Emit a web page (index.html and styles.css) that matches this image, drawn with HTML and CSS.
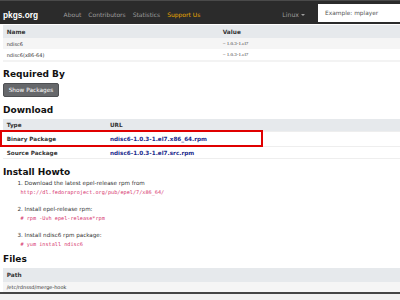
FILE: index.html
```html
<!DOCTYPE html>
<html>
<head>
<meta charset="utf-8">
<title>pkgs.org - ndisc6</title>
<link rel="stylesheet" href="styles.css">
</head>
<body>
<nav class="navbar">
  <a class="brand">pkgs.org</a>
  <ul class="nav-links">
    <li>About</li>
    <li>Contributors</li>
    <li>Statistics</li>
    <li class="support">Support Us</li>
  </ul>
  <div class="nav-right">
    <span class="distro">Linux <span class="caret"></span></span>
    <div class="search">Example: mplayer</div>
  </div>
</nav>
<main class="content">
  <div class="table t-provides">
    <div class="row head"><span>Name</span><span>Value</span></div>
    <div class="row stripe"><span>ndisc6</span><span class="ver">= 1.0.3-1.el7</span></div>
    <div class="row"><span>ndisc6(x86-64)</span><span class="ver">= 1.0.3-1.el7</span></div>
  </div>

  <h2 class="h-required">Required By</h2>
  <button class="btn">Show Packages</button>

  <h2 class="h-download">Download</h2>
  <div class="table t-download">
    <div class="row head"><span>Type</span><span>URL</span></div>
    <div class="row first"><span>Binary Package</span><span><a class="link">ndisc6-1.0.3-1.el7.x86_64.rpm</a></span></div>
    <div class="row second"><span>Source Package</span><span><a class="link">ndisc6-1.0.3-1.el7.src.rpm</a></span></div>
    <div class="highlight"></div>
  </div>

  <h2 class="h-install">Install Howto</h2>
  <ol class="howto">
    <li>Download the latest epel-release rpm from<code>http://dl.fedoraproject.org/pub/epel/7/x86_64/</code></li>
    <li>Install epel-release rpm:<code># rpm -Uvh epel-release*rpm</code></li>
    <li>Install ndisc6 rpm package:<code># yum install ndisc6</code></li>
  </ol>

  <h2 class="h-files">Files</h2>
  <div class="table t-files">
    <div class="row head"><span>Path</span></div>
    <div class="row stripe"><span>/etc/rdnssd/merge-hook</span></div>
  </div>
</main>
<div class="page-end"></div>
</body>
</html>
```

FILE: styles.css
```css
* { box-sizing: border-box; margin: 0; padding: 0; }
html, body { width: 400px; height: 300px; overflow: hidden; background: #fff; }
body { font-family: "DejaVu Sans", Verdana, sans-serif; color: #222; }

.navbar {
  display: flex;
  align-items: center;
  height: 24px;
  padding-top: 4px;
  background: #2b2b2b;
  border-top: 1px solid #4a4a4a;
}
.brand {
  font-family: "Liberation Sans", Arial, sans-serif;
  font-weight: bold;
  font-size: 8.3px;
  color: #fff;
  padding-left: 3px;
  margin-right: 22px;
}
.nav-links { display: flex; list-style: none; }
.nav-links li { padding: 0 3.5px; font-size: 6px; color: #9d9d9d; }
.nav-links .support { color: #e8a800; }
.nav-right { margin-left: auto; display: flex; align-items: center; align-self: stretch; }
.distro {
  display: flex;
  align-items: center;
  gap: 2px;
  font-size: 6.2px;
  color: #9d9d9d;
  margin-right: 13px;
}
.caret {
  width: 0; height: 0;
  border-top: 2px solid #9d9d9d;
  border-left: 2px solid transparent;
  border-right: 2px solid transparent;
}
.search {
  width: 82px;
  height: 18px;
  align-self: flex-start;
  margin-top: -1px;
  background: #fff;
  font-size: 5.85px;
  color: #555;
  padding-left: 7px;
  display: flex;
  align-items: center;
}

.content { padding: 1px 0 0 3px; }

.table .row { display: grid; align-items: center; color: #333; }
.table .row > span { padding-left: 3.7px; white-space: nowrap; }
.table .head { background: #e6e9ec; font-weight: bold; font-size: 5.8px; color: #333; }
.stripe { background: #f5f5f5; }

.t-provides { border-bottom: 2px solid #f3f3f3; }
.t-provides .row { grid-template-columns: 216px 1fr; height: 11px; font-size: 5px; }
.t-provides .head { height: 13px; font-size: 5.8px; }
.ver { font-family: "Liberation Serif", "Times New Roman", serif; }

h2 { font-size: 9px; line-height: 11px; font-weight: bold; color: #111; }
.h-required { margin-top: 7px; }
.h-download { margin-top: 8px; }
.h-install { margin-top: 7.5px; }
.h-files { margin-top: 5px; }

.btn {
  display: block;
  margin-top: 3px;
  height: 14px;
  padding: 0 4.7px;
  background: #66686b;
  border: 1px solid #4e5053;
  border-radius: 2px;
  color: #fff;
  font-family: inherit;
  font-size: 5.8px;
}

.t-download { position: relative; margin-top: 3px; }
.t-download .row { grid-template-columns: 103.3px 1fr; font-size: 5.7px; font-weight: bold; }
.t-download .head { height: 12px; }
.t-download .first { height: 15px; border-top: 1px solid #eee; }
.t-download .second { height: 13px; border-top: 1px solid #eee; border-bottom: 1px solid #eee; }
.link { color: #1a2a8c; text-decoration: none; }
.highlight {
  position: absolute;
  left: -3px;
  top: 11px;
  width: 263px;
  height: 17px;
  border: 2px solid #e00000;
}

.howto {
  margin-top: 1.5px;
  padding-left: 21.5px;
  font-size: 5.6px;
  line-height: 9px;
  color: #333;
}
.howto li + li { margin-top: 8px; }
.howto code {
  display: block;
  margin-left: -4px;
  font-family: "DejaVu Sans Mono", "Liberation Mono", monospace;
  font-size: 5.2px;
  line-height: 9px;
  color: #d6336c;
}

.t-files { margin-top: 3px; }
.t-files .row { grid-template-columns: 1fr; height: 10px; font-size: 5px; }
.t-files .head { height: 14px; font-size: 5.8px; }

.page-end { height: 20px; border-top: 2px solid #444; background: #f0f0f0; }
```
